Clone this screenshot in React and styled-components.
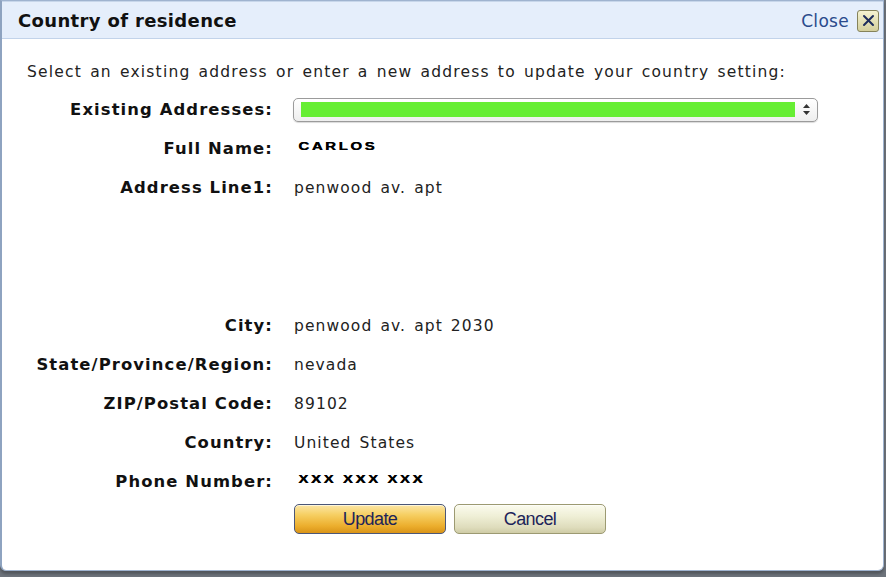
import React from "react";
import styled, { createGlobalStyle } from "styled-components";

const GlobalStyle = createGlobalStyle`
  html, body {
    margin: 0;
    padding: 0;
    background: #6d737b;
  }
  body {
    font-family: "DejaVu Sans", Verdana, sans-serif;
  }
`;

const rows = [
  { label: "Existing Addresses:", kind: "select" },
  { label: "Full Name:", kind: "mask", value: "CARLOS" },
  { label: "Address Line1:", value: "penwood av. apt", tall: true },
  { label: "City:", value: "penwood av. apt 2030" },
  { label: "State/Province/Region:", value: "nevada" },
  { label: "ZIP/Postal Code:", value: "89102" },
  { label: "Country:", value: "United States" },
  { label: "Phone Number:", kind: "mask", value: "xxx xxx xxx" },
];

const App = () => {
  return (
    <>
      <GlobalStyle />
      <Stage>
        <Modal>
          <Header>
            <Title>Country of residence</Title>
            <CloseLink>
              Close
              <CloseBox>
                <svg width="13" height="13" viewBox="0 0 13 13">
                  <path d="M2 2 L11 11 M11 2 L2 11" stroke="#1d2c5c" strokeWidth="2" strokeLinecap="round" />
                </svg>
              </CloseBox>
            </CloseLink>
          </Header>
          <Body>
            <Intro>Select an existing address or enter a new address to update your country setting:</Intro>
            <Form>
              {rows.map((row) => (
                <Row key={row.label} $tall={row.tall}>
                  <Label>{row.label}</Label>
                  {row.kind === "select" ? (
                    <Select>
                      <Chosen />
                      <Arrows>
                        <svg width="7" height="11" viewBox="0 0 7 11">
                          <path d="M3.5 0 L7 4 L0 4 Z M0 7 L7 7 L3.5 11 Z" fill="#333" />
                        </svg>
                      </Arrows>
                    </Select>
                  ) : row.kind === "mask" ? (
                    <Masked>{row.value}</Masked>
                  ) : (
                    <Value>{row.value}</Value>
                  )}
                </Row>
              ))}
              <Actions>
                <Button $variant="primary">Update</Button>
                <Button>Cancel</Button>
              </Actions>
            </Form>
          </Body>
        </Modal>
      </Stage>
    </>
  );
};

const Stage = styled.div`
  width: 886px;
  height: 577px;
  overflow: hidden;
`;

const Modal = styled.div`
  width: 884px;
  height: 571px;
  background: #fff;
  border: 1px solid #9fb3cf;
  border-left: 2px solid #8ea3c0;
  border-radius: 0 0 6px 6px;
  box-sizing: border-box;
  box-shadow: 0 3px 3px rgba(0, 0, 0, 0.25);
  display: flex;
  flex-direction: column;
`;

const Header = styled.div`
  height: 38px;
  background: #e5eefb;
  border-top: 1px solid #c7d6ea;
  border-bottom: 1px solid #c2d3ea;
  display: flex;
  align-items: center;
  justify-content: space-between;
  padding: 1px 4px 0 16px;
  box-sizing: border-box;
`;

const Title = styled.h2`
  margin: 0;
  font-size: 18px;
  font-weight: 700;
  color: #111;
  letter-spacing: 0.35px;
`;

const CloseLink = styled.a`
  display: flex;
  align-items: center;
  gap: 8px;
  color: #2a4a8c;
  font-size: 17px;
  letter-spacing: 0.3px;
  cursor: pointer;
`;

const CloseBox = styled.span`
  width: 20px;
  height: 20px;
  border: 1px solid #85835a;
  border-radius: 3px;
  background: linear-gradient(#f5f3d2, #d3cf9c);
  display: flex;
  align-items: center;
  justify-content: center;
`;

const Body = styled.div`
  padding: 23px 0 0 0;
`;

const Intro = styled.p`
  margin: 0 0 0 25px;
  font-size: 15.5px;
  line-height: 20px;
  letter-spacing: 1.2px;
  word-spacing: 2px;
  color: #222;
`;

const Form = styled.div`
  margin-top: 8px;
  display: flex;
  flex-direction: column;
`;

const Row = styled.div`
  display: grid;
  grid-template-columns: 271px 1fr;
  column-gap: 21px;
  align-items: center;
  height: 39px;
  margin-bottom: ${(p) => (p.$tall ? "99px" : "0")};
`;

const Label = styled.div`
  text-align: right;
  font-weight: 700;
  font-size: 16.4px;
  letter-spacing: 1.1px;
  color: #111;
`;

const Value = styled.div`
  font-size: 15.5px;
  letter-spacing: 1.1px;
  word-spacing: 2px;
  color: #222;
`;

const Masked = styled.div`
  font-family: "Liberation Sans", Arial, sans-serif;
  font-weight: 900;
  font-size: 10.5px;
  letter-spacing: 1.85px;
  text-transform: uppercase;
  color: #000;
  transform: scaleX(1.42);
  transform-origin: left center;
  padding-left: 3px;
  margin-top: -5px;
  text-shadow: 0.4px 0 0 #000;
`;

const Select = styled.div`
  width: 525px;
  height: 24px;
  margin-left: -1px;
  box-sizing: border-box;
  border: 1px solid #9b9b9b;
  border-radius: 5px;
  background: linear-gradient(#ffffff, #eeeeee);
  box-shadow: 0 1px 1px rgba(0, 0, 0, 0.15);
  display: flex;
  align-items: center;
  padding: 0 7px 0 7px;
  gap: 8px;
`;

const Chosen = styled.div`
  flex: 1;
  height: 15px;
  background: #66ee33;
`;

const Arrows = styled.span`
  display: flex;
  align-items: center;
`;

const Actions = styled.div`
  display: flex;
  gap: 8px;
  margin: 3px 0 0 292px;
`;

const Button = styled.button`
  width: 152px;
  height: 30px;
  border-radius: 5px;
  font-family: "Liberation Sans", Arial, sans-serif;
  font-size: 18px;
  color: #1d2459;
  cursor: pointer;
  border: 1px solid ${(p) => (p.$variant === "primary" ? "#4b5778" : "#9c9a72")};
  background: ${(p) =>
    p.$variant === "primary"
      ? "linear-gradient(#fbe6a6 0%, #f6cf62 35%, #ecae2d 75%, #d99418 100%)"
      : "linear-gradient(#fbfbee 0%, #efefd6 40%, #dedcbc 80%, #cfcca6 100%)"};
  box-shadow: inset 0 1px 0 rgba(255, 255, 255, 0.6);
  letter-spacing: -0.6px;
`;

export default App;
